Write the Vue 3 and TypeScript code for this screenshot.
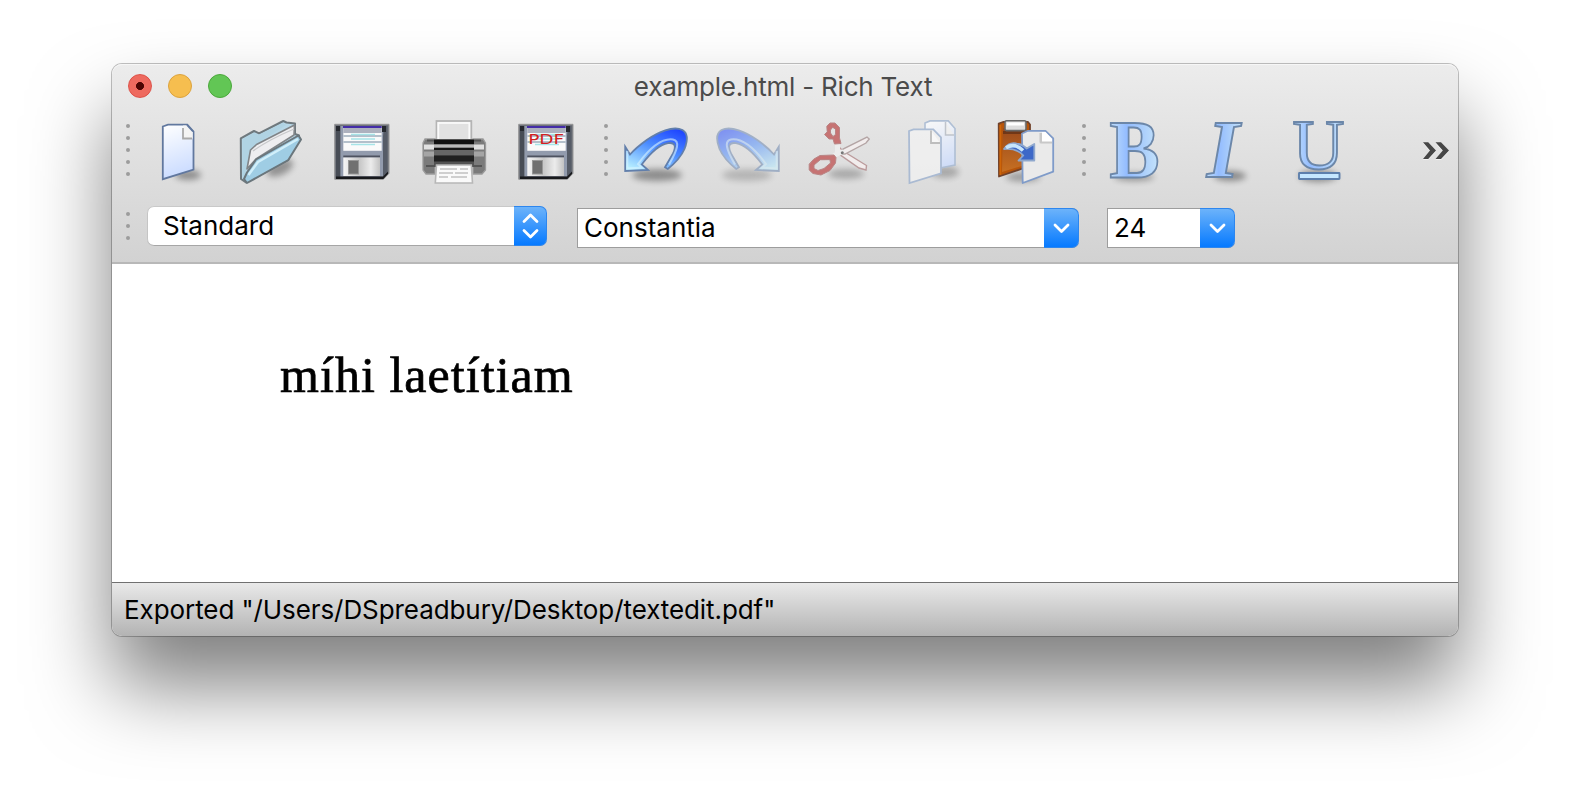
<script setup lang="ts">
import { ref } from 'vue'

const fileName = ref('example.html')
const paragraphStyle = ref('Standard')
const fontFamily = ref('Constantia')
const fontSize = ref('24')
const content = ref('míhi laetítiam')
const status = ref('Exported "/Users/DSpreadbury/Desktop/textedit.pdf"')

const fileTools = ['new', 'open', 'save', 'print', 'pdf']
const editTools = ['undo', 'redo', 'cut', 'copy', 'paste']
const formatTools = ['bold', 'italic', 'underline']
const groups = [fileTools, editTools, formatTools]
</script>

<template>
  <main class="desktop">
    <section class="window">
      <header class="chrome">
        <div class="titlebar">
          <div class="lights">
            <span class="light close"></span>
            <span class="light minimize"></span>
            <span class="light zoom"></span>
          </div>
          <h1 class="title">{{ fileName }} - Rich Text</h1>
        </div>

        <div class="toolbar">
          <template v-for="(group, g) in groups" :key="g">
            <div class="handle"><i v-for="n in 5" :key="n"></i></div>
            <button v-for="tool in group" :key="tool" class="tool" :aria-label="tool">
              <svg class="icon" viewBox="0 0 64 64">
                <defs>
                  <filter :id="'blur-' + tool" x="-50%" y="-100%" width="200%" height="300%"><feGaussianBlur stdDeviation="3" /></filter>
                  <linearGradient :id="'page-' + tool" x1="0" y1="0" x2="0.2" y2="1"><stop offset="0" stop-color="#fff" /><stop offset="1" stop-color="#cbdcff" /></linearGradient>
                  <linearGradient :id="'metal-' + tool"><stop offset="0" stop-color="#f6f6f6" /><stop offset=".45" stop-color="#c8c8c8" /><stop offset=".75" stop-color="#ececec" /><stop offset="1" stop-color="#c2c2c2" /></linearGradient>
                  <linearGradient :id="'letter-' + tool"><stop offset="0" stop-color="#c3e0fb" /><stop offset=".35" stop-color="#93bcff" /><stop offset=".65" stop-color="#a9cdfb" /><stop offset="1" stop-color="#c6e4fb" /></linearGradient>
                  <linearGradient :id="'sweep-' + tool" x1=".8" y1="0" x2=".2" y2="1"><stop offset="0" stop-color="#1f46ff" /><stop offset=".45" stop-color="#4b8cff" /><stop offset="1" stop-color="#b7efff" /></linearGradient>
                  <linearGradient :id="'board-' + tool" x1="0" y1="0" x2="0" y2="1"><stop offset="0" stop-color="#9a4a1c" /><stop offset="1" stop-color="#c66f22" /></linearGradient>
                </defs>

                <g v-if="tool === 'new'">
                  <ellipse cx="42" cy="55" rx="13" ry="5" fill="#000" opacity=".36" :filter="`url(#blur-${tool})`" />
                  <path d="M16.8 6.5 22 4.6H41.3L47.5 11.5V49.5L16.8 59.2Z" :fill="`url(#page-${tool})`" stroke="#61789f" stroke-width="1.8" />
                  <path d="M37 5.5Q38.5 10 37 18.5L46.7 18.5V12L41 5.5Z" fill="#f4f4f4" />
                  <path d="M37 8V18.5H46" fill="none" stroke="#aaa" stroke-width="1.8" />
                  <path d="M41 5 47 11.5" stroke="#61789f" stroke-width="1.8" />
                </g>

                <g v-else-if="tool === 'open'" stroke-linejoin="round">
                  <ellipse cx="42" cy="48" rx="14" ry="7" fill="#000" opacity=".34" :filter="`url(#blur-${tool})`" transform="rotate(-25 42 48)" />
                  <path d="M2.8 18.3 16 11 21 13.3 45.3 1 48.5 2.5 57 3.5V14L61 15.5 50 40 8 62.5 3 59Z" fill="#b7d7e7" stroke="#6f797e" stroke-width="2" />
                  <path d="M4.5 19 16 13 20.5 15 45 3 48 5 17 25 8 49 6.5 58 4.5 56Z" fill="#b0d3e3" />
                  <path d="M9 49 12.5 30 18.5 24.5 56.5 5 56 15 18 39Z" fill="#eeeef0" stroke="#818588" stroke-width="1.6" />
                  <path d="M15 31Q30 20 56 9" fill="none" stroke="#c7c8ca" stroke-width="1.3" />
                  <path d="M6 59 9 52.5 18 39.5 60.5 15.5 63 19.5 50.3 40 9 63Z" fill="#9fcde4" stroke="#6a767c" stroke-width="2" />
                  <path d="M10.5 55 20 42 60 19" fill="none" stroke="#d1effa" stroke-width="2.4" />
                </g>

                <g v-else-if="tool === 'save' || tool === 'pdf'">
                  <path d="M4.7 4.3H59V53.3L53.3 59.3H4.7Z" fill="#6e727a" stroke="#969696" stroke-width="1" />
                  <path d="M6 6H10.5V57H6Z" fill="#474c55" />
                  <path d="M10.5 6H54V56.5H10.5Z" fill="#929bad" />
                  <path d="M54 6H57.5V53L53 56.5V16Z" fill="#565c67" />
                  <path d="M6 56.5H53L58 51.5V54L53.3 59H6Z" fill="#18191c" />
                  <path d="M52 6H56V12H52ZM6 6H10V11H6Z" fill="#25282e" />
                  <rect x="13.3" y="6.2" width="38.4" height="24.6" fill="#fafafa" />
                  <rect x="13.3" y="8" width="38.4" height="5" fill="#adb1be" />
                  <path d="M13.3 16H51.7M13.3 22H51.7" stroke="#b4c0cb" stroke-width="2" />
                  <path d="M21 14.5H45M21 19H45M21 24.5H45" stroke="#98e1e5" stroke-width="1.7" opacity=".85" />
                  <rect x="13" y="6" width="38.7" height="2" fill="#442da8" />
                  <rect x="13.3" y="35.5" width="36.7" height="2" fill="#4e5360" />
                  <rect x="13.3" y="37.5" width="36.7" height="18.5" :fill="`url(#metal-${tool})`" />
                  <rect x="18.5" y="40.5" width="10" height="13.5" fill="#707070" stroke="#979797" />
                  <text v-if="tool === 'pdf'" class="pdf" x="14.2" y="24.2" textLength="36" lengthAdjust="spacingAndGlyphs">PDF</text>
                </g>

                <g v-else-if="tool === 'print'">
                  <rect x="14.5" y="1" width="34.8" height="21" fill="#e4e4e4" stroke="#b4b4b4" stroke-width="1.8" />
                  <rect x="16.3" y="3" width="31" height="17" fill="#e1e1e1" stroke="#fafafa" stroke-width="1.8" />
                  <path d="M3 19H13V54H4L1 50V23ZM51 19H61L63.5 23V50L60 54H51Z" fill="#7b7b7b" stroke="#9c9c9c" stroke-width="1.3" />
                  <path d="M2 27H12M52 27H62" stroke="#e0e0e0" stroke-width="5" />
                  <path d="M2 34H12M52 34H62" stroke="#a5a5a5" stroke-width="5" />
                  <path d="M5 20.5H12M52 20.5H59M4 46H13M51 46H60" stroke="#555" stroke-width="2" />
                  <rect x="12" y="19" width="40" height="28" fill="#525252" />
                  <rect x="12" y="20" width="40" height="4" fill="#111" />
                  <rect x="12" y="24.5" width="40" height="3" fill="#b9b9b9" />
                  <rect x="12" y="28" width="40" height="2" fill="#161616" />
                  <rect x="12" y="30" width="40" height="5.5" fill="#666" />
                  <rect x="12" y="35.5" width="40" height="6" fill="#202020" />
                  <path d="M14.5 45H49.3L50.5 63H13.3Z" fill="#fafafa" stroke="#b7b7b7" stroke-width="1.6" />
                  <path d="M18 49H35M38 49H46M17 53H31M33 53H46M17 57H26M29 57H45" stroke="#cfcfcf" stroke-width="1.8" />
                </g>

                <g v-else-if="tool === 'undo' || tool === 'redo'" :class="{ disabled: tool === 'redo' }" :transform="tool === 'redo' ? 'matrix(-1 0 0 1 64 0)' : undefined">
                  <ellipse cx="33" cy="55" rx="25" ry="6" fill="#000" opacity=".36" :filter="`url(#blur-${tool})`" />
                  <path d="M1.2 26.7V51L24 50 17.7 44.5C25 35 35 24.5 44 23.2 51 22 52.5 26 49 33.5L41 47.3 43.7 49C50 44 57 37 60.5 29 64 20 63.5 13 58.5 10 49 5.5 34 12 22.7 20 15 25.5 10 30 6 34.5Z" :fill="`url(#sweep-${tool})`" stroke="#627fab" stroke-width="1.8" />
                  <path d="M3.3 31V48.5L18 47.6 14 44C25 29 38 18 49 19.5 56 21 54 29 45 44.5" fill="none" stroke="#d9f4ff" stroke-width="2" opacity=".6" />
                </g>

                <g v-else-if="tool === 'cut'" fill="none" stroke-linecap="round">
                  <ellipse cx="38" cy="54" rx="18" ry="5" fill="#000" opacity=".24" :filter="`url(#blur-${tool})`" />
                  <path d="M30 26 35 31 58.5 45.5 58 50 51 48 31 34Z" fill="#f2eded" stroke="#bb9b9c" stroke-width="1.4" />
                  <path d="M31 34 35 29 59 17 61.2 19 58 23 37 34Z" fill="#f2eded" stroke="#b4a5a5" stroke-width="1.4" />
                  <path d="M29.5 32V25M27 35 34 32" stroke="#ececec" stroke-width="5" />
                  <path d="M19 6 22 3H27L31.5 7.5V18L33 23.5 26.5 24 25 19H21L16.5 14.5 19 12ZM24.5 7.5 22.5 10V13L25 16.5 27.5 14.5V9.5Z" class="grip" />
                  <path d="M6 39 12 35.5 26 35 28 37.5 27.5 43 22 50.5 13 55 5 53.5 1.2 50V44.5ZM12 40 6 45V48.5L10 50.5 16 48.5 22.5 43 22 40Z" class="grip" />
                  <circle cx="34.3" cy="32.7" r="1.5" fill="#767676" />
                </g>

                <g v-else-if="tool === 'copy'" class="faded">
                  <ellipse cx="45" cy="52" rx="14" ry="6" fill="#000" opacity=".32" :filter="`url(#blur-${tool})`" />
                  <path d="M25 3 30 .9H48.3L55 8.5V45L25 51Z" :fill="`url(#page-${tool})`" stroke="#9eb3d0" stroke-width="1.6" />
                  <path d="M45.5 2V15H54" fill="#f3f3f3" stroke="#b4bac4" stroke-width="1.5" />
                  <path d="M9 11 13.5 9.3H33.3L41 17.3V53.3L9.5 63Z" fill="#f3f3f3" stroke="#99afcf" stroke-width="1.8" />
                  <path d="M31 10.5V23H40" fill="#fff" stroke="#b1b1b1" stroke-width="1.8" />
                </g>

                <g v-else-if="tool === 'paste'" stroke-linejoin="round">
                  <ellipse cx="31" cy="57" rx="17" ry="4.5" fill="#000" opacity=".3" :filter="`url(#blur-${tool})`" />
                  <path d="M6.7 3.5 11 2H36L38 4.5V46L7 56.5Z" fill="#b6550b" stroke="#70422b" stroke-width="1.8" />
                  <path d="M11 8 36 12V44L10 52Z" :fill="`url(#board-${tool})`" />
                  <path d="M8.3 5V55" stroke="#cf6508" stroke-width="1.8" />
                  <path d="M11 12.5H36" stroke="#582b15" stroke-width="3" opacity=".65" />
                  <rect x="13" y=".8" width="21" height="9.8" rx="1.5" fill="#ddd" stroke="#676767" stroke-width="1.6" />
                  <path d="M15 4H32" stroke="#fff" stroke-width="3" />
                  <path d="M30 13.5 36 10.8H53.5L61.2 18.3V51.7L30.7 63Z" fill="#eaeaea" stroke="#7f9bc9" stroke-width="1.8" />
                  <path d="M49 13V22H60" fill="none" stroke="#b9b9b9" stroke-width="3" opacity=".7" />
                  <path d="M50 12V21.5H60V19L53.5 12Z" fill="#fff" />
                  <path d="M12 29Q17 22 24 23.5 30 24 34.7 28.5L42.3 24V40.5H26.5L31.3 35.5Q25 28 12 29Z" fill="#3d68c8" stroke="#8fa8cd" stroke-width="1.8" />
                  <path d="M14 27.7Q23 22.5 31 30.5" fill="none" stroke="#c7e5fb" stroke-width="3.5" />
                </g>

                <g v-else-if="tool === 'bold'">
                  <ellipse cx="32" cy="57" rx="20" ry="4" fill="#000" opacity=".32" :filter="`url(#blur-${tool})`" />
                  <text class="letter bold" x="7.5" y="57" textLength="50" lengthAdjust="spacingAndGlyphs" :fill="`url(#letter-${tool})`">B</text>
                </g>
                <g v-else-if="tool === 'italic'">
                  <ellipse cx="36" cy="56" rx="16" ry="5" fill="#000" opacity=".38" :filter="`url(#blur-${tool})`" />
                  <text class="letter italic" x="13" y="57" :fill="`url(#letter-${tool})`">I</text>
                </g>
                <g v-else>
                  <ellipse cx="32" cy="56" rx="19" ry="6" fill="#000" opacity=".36" :filter="`url(#blur-${tool})`" />
                  <text class="letter underline" x="6.5" y="49.3" :fill="`url(#letter-${tool})`">U</text>
                  <rect x="13" y="53" width="40.5" height="6" rx=".5" fill="#c5e7ff" stroke="#5d7fac" stroke-width="1.9" />
                </g>
              </svg>
            </button>
          </template>
          <button class="more" aria-label="more">
            <svg viewBox="0 0 28 20"><path d="M1 1.2H6.2L14 9.5 6.2 18H1L8 9.5ZM13.5 1.2H19L27 9.5 19 18H13.5L20.8 9.5Z" /></svg>
          </button>
        </div>

        <div class="formatbar">
          <div class="handle small"><i v-for="n in 3" :key="n"></i></div>
          <div class="select popup">
            <span class="value">{{ paragraphStyle }}</span>
            <span class="stepper"><svg viewBox="0 0 33 40"><path d="M10 15.5 16.5 9 23 15.5M10 24.5 16.5 31 23 24.5" /></svg></span>
          </div>
          <div class="select combo family">
            <span class="value">{{ fontFamily }}</span>
            <span class="stepper"><svg viewBox="0 0 35 40"><path d="M11 17 17.5 23.5 24 17" /></svg></span>
          </div>
          <div class="select combo size">
            <span class="value">{{ fontSize }}</span>
            <span class="stepper"><svg viewBox="0 0 35 40"><path d="M11 17 17.5 23.5 24 17" /></svg></span>
          </div>
        </div>
      </header>

      <article class="document"><p>{{ content }}</p></article>
      <footer class="status"><span>{{ status }}</span></footer>
    </section>
  </main>
</template>

<style>
body {
  margin: 0;
  background: #fff;
}
</style>

<style scoped>
* {
  box-sizing: border-box;
}
.desktop {
  width: 1570px;
  height: 796px;
  padding: 64px 112px 160px;
  overflow: hidden;
  background: #fff;
  font-family: Inter, "Liberation Sans", sans-serif;
}
.window {
  display: flex;
  flex-direction: column;
  width: 1346px;
  height: 572px;
  border-radius: 10px;
  background: #fff;
  box-shadow: 0 0 0 1px rgba(0, 0, 0, 0.24), 0 50px 80px rgba(0, 0, 0, 0.5);
}
.chrome {
  height: 200px;
  border-bottom: 2px solid #b8b8b8;
  border-radius: 10px 10px 0 0;
  background: linear-gradient(#ececec, #d2d2d2);
  box-shadow: inset 0 1px #f6f6f6;
}
.titlebar {
  display: grid;
  grid-template-columns: 120px 1fr 124px;
  align-items: center;
  height: 44px;
}
.lights {
  display: flex;
  gap: 16px;
  padding-left: 16px;
}
.light {
  width: 24px;
  height: 24px;
  border: 1px solid #dd5148;
  border-radius: 50%;
  background: #ee6a5f;
}
.close {
  background: radial-gradient(circle, #4c0503 0 3.7px, #ee6a5f 4.3px);
}
.minimize {
  border-color: #dca33e;
  background: #f6be4f;
}
.zoom {
  border-color: #4ba83b;
  background: #62c655;
}
.title {
  margin: 1px 0 0;
  color: #4b4b4b;
  font-size: 26px;
  font-weight: 400;
  line-height: 32px;
  letter-spacing: -0.22px;
  text-align: center;
  white-space: nowrap;
}
.toolbar {
  display: flex;
  align-items: center;
  height: 88px;
  padding-left: 2px;
}
.handle {
  display: flex;
  flex: none;
  flex-direction: column;
  gap: 8px;
  width: 18px;
  padding-left: 12px;
  margin-top: -4px;
}
.handle i {
  width: 4px;
  height: 4px;
  border-radius: 50%;
  background: #9c9c9c;
}
.tool {
  display: flex;
  flex: none;
  justify-content: center;
  width: 92px;
  padding: 0;
  border: 0;
  background: none;
}
.icon {
  display: block;
  width: 64px;
  height: 64px;
  overflow: visible;
}
.disabled {
  opacity: 0.5;
}
.faded {
  opacity: 0.75;
}
.grip {
  fill: #c67373;
  fill-rule: evenodd;
  stroke: #b98585;
  stroke-width: 1px;
  stroke-linejoin: round;
}
.pdf {
  fill: #d31e21;
  font: 14px "DejaVu Sans", sans-serif;
}
.letter {
  stroke: #6c87a9;
  stroke-width: 1.9px;
  font-family: "Liberation Serif", serif;
}
.bold {
  font-size: 83px;
  font-weight: 700;
}
.italic {
  font-size: 83px;
  font-style: italic;
  font-weight: 700;
}
.underline {
  font-size: 72px;
}
.more {
  width: 28px;
  height: 20px;
  padding: 0;
  margin: -2px 8px 0 auto;
  border: 0;
  background: none;
}
.more svg {
  display: block;
  width: 28px;
  height: 20px;
  fill: #464646;
  filter: drop-shadow(0 1px #f2f2f2);
}
.formatbar {
  display: flex;
  align-items: flex-start;
  padding: 10px 0 0 2px;
}
.small {
  margin-top: 6px;
}
.select {
  display: flex;
  flex: none;
  height: 40px;
  color: #000;
  font-size: 26px;
  line-height: 38px;
  background: #fff;
}
.value {
  flex: 1;
}
.stepper {
  border: solid #2d86ee;
  border-width: 1px 1px 1px 0;
  border-radius: 0 7px 7px 0;
  background: linear-gradient(#6cb3fa, #067aff);
}
.stepper svg {
  display: block;
  height: 40px;
  margin-top: -1px;
  fill: none;
  stroke: #fff;
  stroke-width: 2.8px;
  stroke-linecap: round;
  stroke-linejoin: round;
}
.popup {
  width: 400px;
  margin-left: 15px;
  padding-left: 16px;
  border-radius: 7px;
  line-height: 40px;
  box-shadow: inset 0 1px #c9c9c9, inset 1px 0 #c5c5c5, inset 0 -1px #a6a6a6;
}
.popup .stepper {
  width: 33px;
}
.combo {
  margin-top: 2px;
  border: solid #9d9d9d;
  border-width: 1px 0 1px 1px;
  border-radius: 0 7px 7px 0;
}
.combo .stepper {
  width: 35px;
  height: 40px;
  margin: -1px 0;
}
.family {
  width: 502px;
  margin-left: 30px;
  padding-left: 6px;
}
.size {
  width: 128px;
  margin-left: 28px;
  padding-left: 6px;
}
.document {
  flex: 1;
  padding: 81px 168px;
  background: #fff;
}
.document p {
  margin: 0;
  color: #000;
  font: 50px/60px "Liberation Serif", serif;
  letter-spacing: 1.05px;
  -webkit-text-stroke: 0.7px #000;
  white-space: nowrap;
}
.status {
  height: 54px;
  padding: 11px 12px 0;
  border-top: 1px solid #707070;
  border-radius: 0 0 10px 10px;
  background: linear-gradient(#e9e9e9, #b3b3b3);
  color: #000;
  font-size: 26px;
  line-height: 32px;
  letter-spacing: -0.08px;
  white-space: nowrap;
}
</style>
